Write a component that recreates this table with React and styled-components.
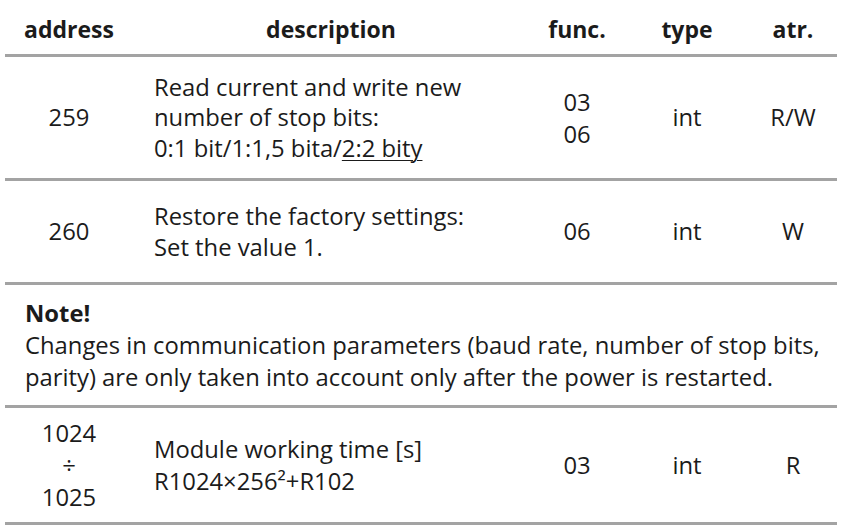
import React from "react";
import styled, { createGlobalStyle } from "styled-components";

const Global = createGlobalStyle`
  html, body { margin: 0; padding: 0; background: #ffffff; }
  body { font-family: "Open Sans", "Noto Sans", sans-serif; color: #1b1b1b; }
`;

const Table = styled.div`
  width: 832px;
  margin-left: 5px;
  font-size: 23.8px;
`;

const Row = styled.div`
  display: grid;
  grid-template-columns: 128px 396px 96px 124px 88px;
  align-items: center;
  height: ${(p) => p.$h}px;
  border-bottom: 3px solid #a3a3a3;
  line-height: ${(p) => p.$lh || 31}px;
`;

const HeadCell = styled.div`
  font-weight: 700;
  font-size: 23px;
  text-align: center;
  padding-top: 4px;
`;

const Cell = styled.div`
  text-align: center;
  white-space: nowrap;
  line-height: ${(p) => (p.$lh ? `${p.$lh}px` : "inherit")};
`;

const Desc = styled.div`
  text-align: left;
  padding-left: 21px;
  white-space: nowrap;
`;

const Under = styled.span`
  text-decoration: underline;
  text-underline-offset: 3px;
  text-decoration-thickness: 1px;
`;

const Note = styled.div`
  height: 120px;
  display: flex;
  flex-direction: column;
  justify-content: center;
  padding-left: 20px;
  line-height: 32px;
  border-bottom: 3px solid #a3a3a3;
  white-space: nowrap;
`;

const NoteTitle = styled.div`
  font-weight: 700;
`;

export default function App() {
  return (
    <>
      <Global />
      <Table>
        <Row $h={54} $lh={32}>
          <HeadCell>address</HeadCell>
          <HeadCell>description</HeadCell>
          <HeadCell>func.</HeadCell>
          <HeadCell>type</HeadCell>
          <HeadCell>atr.</HeadCell>
        </Row>
        <Row $h={121} $lh={30.5}>
          <Cell>259</Cell>
          <Desc>
            Read current and write new
            <br />
            number of stop bits:
            <br />
            0:1 bit/1:1,5 bita/<Under>2:2 bity</Under>
          </Desc>
          <Cell $lh={32}>
            03
            <br />
            06
          </Cell>
          <Cell>int</Cell>
          <Cell>R/W</Cell>
        </Row>
        <Row $h={101} $lh={31}>
          <Cell>260</Cell>
          <Desc>
            Restore the factory settings:
            <br />
            Set the value 1.
          </Desc>
          <Cell>06</Cell>
          <Cell>int</Cell>
          <Cell>W</Cell>
        </Row>
        <Note>
          <NoteTitle>Note!</NoteTitle>
          <div>Changes in communication parameters (baud rate, number of stop bits,</div>
          <div>parity) are only taken into account only after the power is restarted.</div>
        </Note>
        <Row $h={114} $lh={32}>
          <Cell>
            1024
            <br />
            ÷
            <br />
            1025
          </Cell>
          <Desc>
            Module working time [s]
            <br />
            R1024×256²+R102
          </Desc>
          <Cell>03</Cell>
          <Cell>int</Cell>
          <Cell>R</Cell>
        </Row>
      </Table>
    </>
  );
}
